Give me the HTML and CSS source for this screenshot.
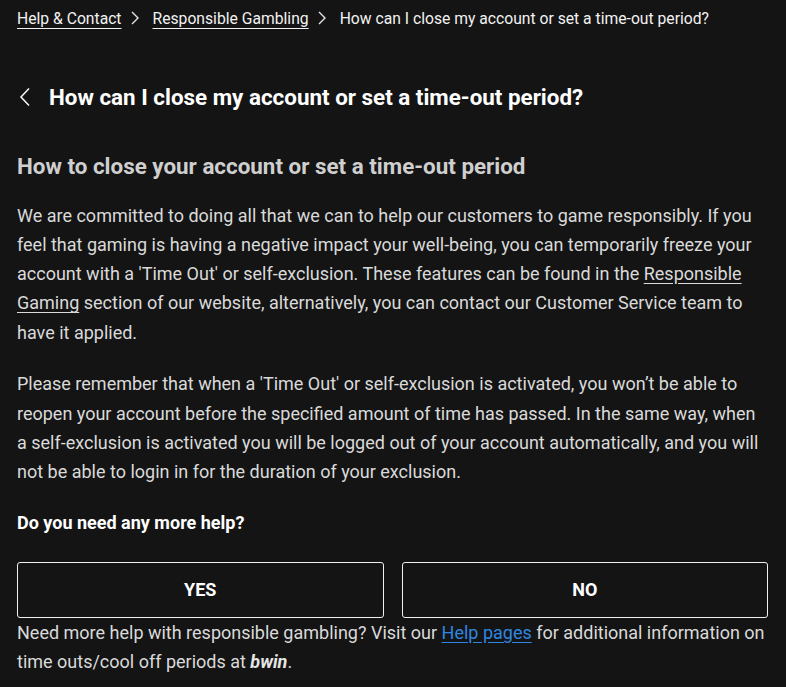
FILE: index.html
```html
<!DOCTYPE html>
<html lang="en">
<head>
<meta charset="utf-8">
<link rel="stylesheet" href="styles.css">
</head>
<body>
<div class="page">
  <nav class="crumbs">
    <a class="crumb-link" href="#">Help &amp; Contact</a>
    <svg class="crumb-sep" width="8" height="14" viewBox="0 0 8 14"><path d="M1 1l6 6-6 6" fill="none" stroke="#e6e6e6" stroke-width="1.4"/></svg>
    <a class="crumb-link" href="#">Responsible Gambling</a>
    <svg class="crumb-sep" width="8" height="14" viewBox="0 0 8 14"><path d="M1 1l6 6-6 6" fill="none" stroke="#e6e6e6" stroke-width="1.4"/></svg>
    <span class="crumb-current">How can I close my account or set a time-out period?</span>
  </nav>

  <div class="title-row">
    <svg class="back" width="12" height="20" viewBox="0 0 12 20"><path d="M10 1.5L2 10l8 8.5" fill="none" stroke="#f0f0f0" stroke-width="1.6"/></svg>
    <h1 class="title">How can I close my account or set a time-out period?</h1>
  </div>

  <h2 class="subtitle">How to close your account or set a time-out period</h2>

  <p class="para">We are committed to doing all that we can to help our customers to game responsibly. If you feel that gaming is having a negative impact your well-being, you can temporarily freeze your account with a 'Time Out' or self-exclusion. These features can be found in the <a class="inline-link" href="#">Responsible Gaming</a> section of our website, alternatively, you can contact our Customer Service team to have it applied.</p>

  <p class="para">Please remember that when a 'Time Out' or self-exclusion is activated, you won’t be able to reopen your account before the specified amount of time has passed. In the same way, when a self-exclusion is activated you will be logged out of your account automatically, and you will not be able to login in for the duration of your exclusion.</p>

  <p class="question">Do you need any more help?</p>

  <div class="buttons">
    <button class="btn">YES</button>
    <button class="btn">NO</button>
  </div>

  <p class="footer">Need more help with responsible gambling? Visit our <a class="blue-link" href="#">Help pages</a> for additional information on time outs/cool off periods at <b class="brand">bwin</b>.</p>
</div>
</body>
</html>
```

FILE: styles.css
```css
html, body {
  margin: 0;
  padding: 0;
  background: #141414;
}
body {
  font-family: Roboto, "Liberation Sans", Arial, sans-serif;
  color: #dadada;
}
.page {
  padding: 0 17px;
}
.crumbs {
  display: flex;
  align-items: center;
  height: 36px;
  font-size: 15.7px;
  color: #f2f2f2;
  white-space: nowrap;
}
.crumb-link {
  color: #f2f2f2;
  text-decoration: underline;
  text-underline-offset: 4px;
  text-decoration-thickness: 1px;
}
.crumb-sep {
  margin: 0 14px 0 9px;
}
.crumb-current {
  color: #f2f2f2;
}
.title-row {
  display: flex;
  align-items: center;
  margin-top: 43px;
  height: 36px;
}
.back {
  margin-left: 2px;
  margin-right: 18px;
}
.title {
  margin: 0;
  font-size: 22.4px;
  font-weight: 700;
  color: #ffffff;
}
.subtitle {
  margin: 36px 0 0;
  font-size: 22.4px;
  font-weight: 700;
  color: #cfcfcf;
  line-height: 30px;
}
.para {
  margin: 19.5px 0 0;
  font-size: 18px;
  line-height: 29.3px;
  color: #dadada;
}
.para + .para {
  margin-top: 22.5px;
}
.inline-link {
  color: #dadada;
  text-decoration: underline;
  text-underline-offset: 3px;
}
.question {
  margin: 22px 0 0;
  font-size: 18px;
  font-weight: 700;
  color: #ffffff;
  line-height: 28px;
}
.buttons {
  display: grid;
  grid-template-columns: 1fr 1fr;
  gap: 18px;
  margin-top: 25px;
  margin-right: 1px;
}
.btn {
  height: 56px;
  background: transparent;
  border: 1.5px solid #f0f0f0;
  border-radius: 3px;
  color: #ffffff;
  font-family: Roboto, "Liberation Sans", Arial, sans-serif;
  font-size: 18px;
  font-weight: 700;
}
.footer {
  margin: 0;
  font-size: 18px;
  line-height: 29.3px;
  color: #dadada;
}
.blue-link {
  color: #2f86e0;
  text-decoration: underline;
  text-underline-offset: 3px;
}
.brand {
  font-style: italic;
  font-weight: 700;
  color: #e6e6e6;
}
```
